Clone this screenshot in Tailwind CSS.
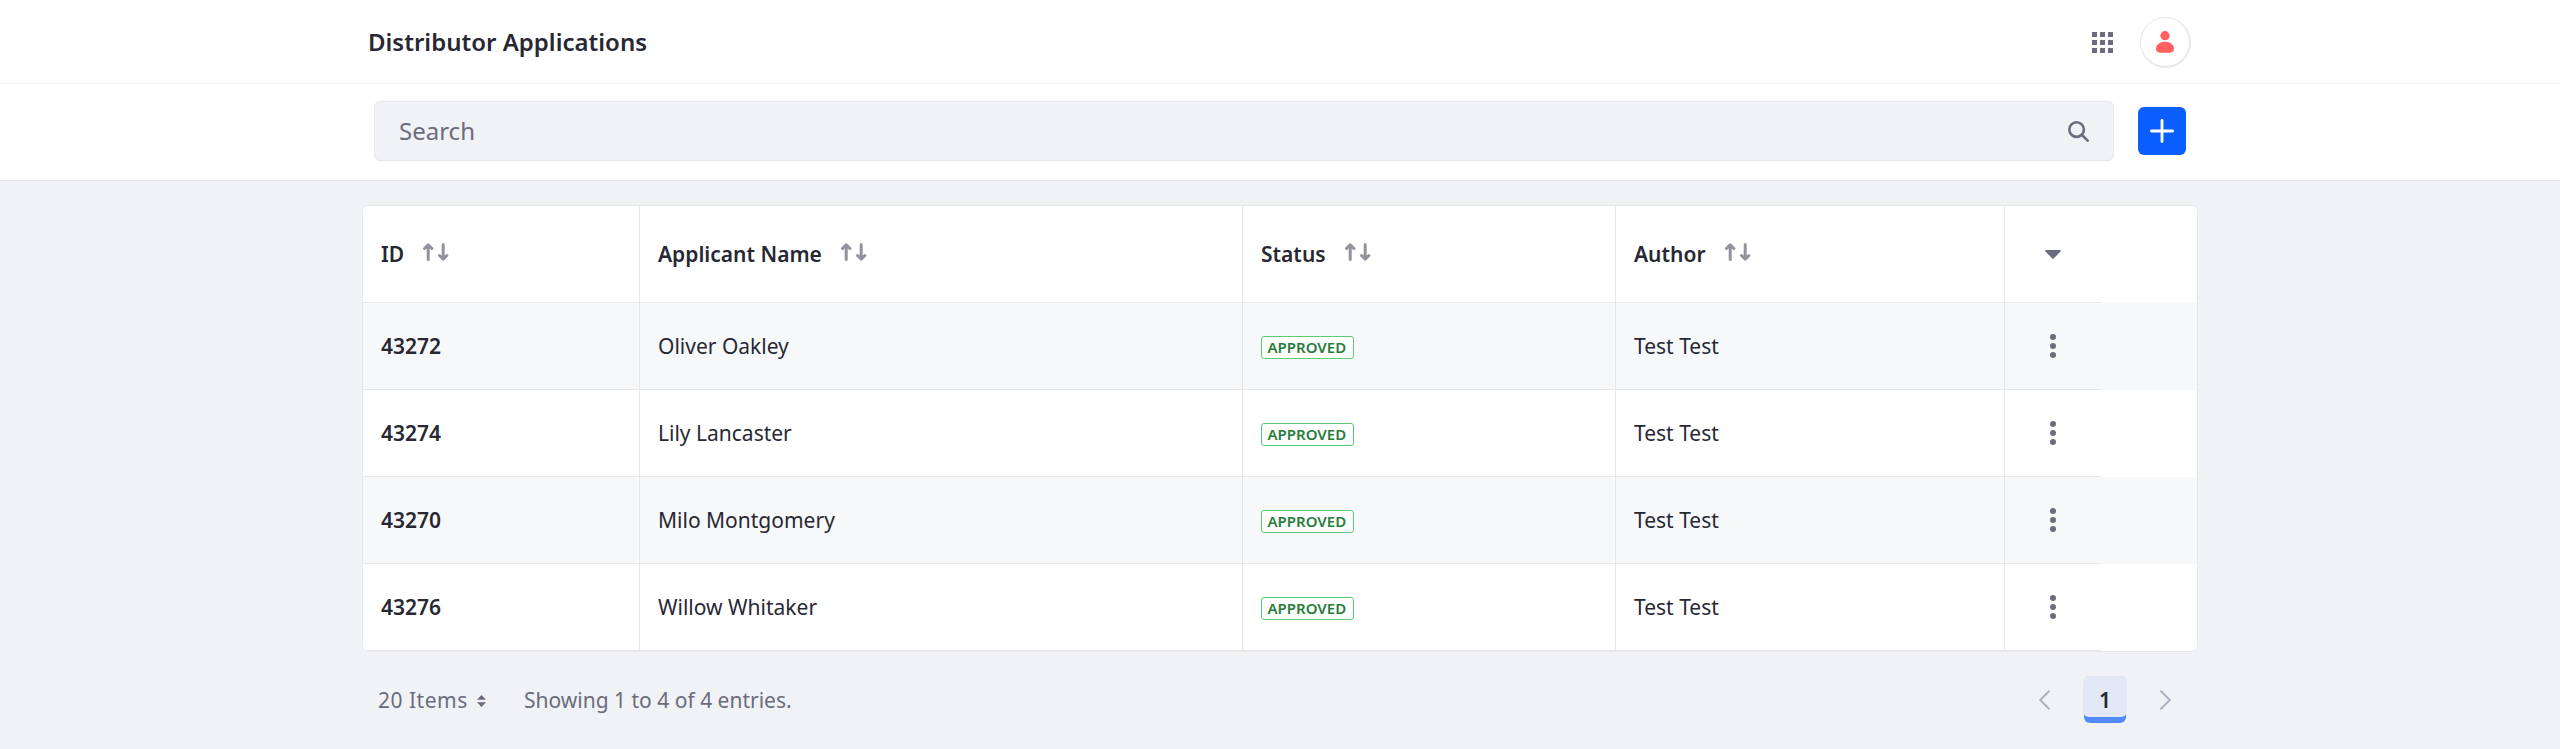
<!DOCTYPE html>
<html lang="en">
<head>
<meta charset="utf-8">
<title>Distributor Applications</title>
<script src="https://cdn.jsdelivr.net/npm/@tailwindcss/browser@4"></script>
</head>
<body class="h-[749px] overflow-hidden bg-[#f1f2f5] font-['Noto_Sans',sans-serif] text-[21px] leading-[32px] text-[#272833]">
<svg class="hidden">
  <symbol id="sort" viewBox="0 0 26 18"><path d="M5.200 16.500V2M1.500 5.500 5.200 1.800l3.700 3.700M20.200 1.500v14.500M16.500 12.500l3.700 3.700 3.700-3.700" fill="none" stroke="#92929c" stroke-width="3" stroke-linecap="round" stroke-linejoin="round"/></symbol>
  <symbol id="dots" viewBox="0 0 6 24"><g fill="#6b6c7e"><circle cx="3" cy="3" r="3"/><circle cx="3" cy="12" r="3"/><circle cx="3" cy="21" r="3"/></g></symbol>
</svg>

<header class="flex h-[84px] items-center border-b border-[#f1f2f5] bg-white pt-[2px] pr-[369px] pl-[368px]">
  <h1 class="-mt-px grow text-[24px] leading-9 font-semibold">Distributor Applications</h1>
  <svg class="mr-[27px] h-[21px] w-[21px]" viewBox="0 0 21 21" fill="#6b6c7e"><path d="M0 0h5v5H0zM8 0h5v5H8zM16 0h5v5h-5zM0 8h5v5H0zM8 8h5v5H8zM16 8h5v5h-5zM0 16h5v5H0zM8 16h5v5H8zM16 16h5v5h-5z"/></svg>
  <div class="flex h-[51px] w-[51px] items-center justify-center rounded-full border border-r-2 border-b-2 border-[#e7e7ed] bg-white">
    <svg class="h-[22px] w-[18px]" viewBox="0 0 18 22" fill="#ff5f5f"><circle cx="9" cy="4.700" r="4.600"/><path d="M9 10.800c5.500 0 9 3.400 9 6.800 0 3-2 4.200-4.500 4.200h-9C2 21.800 0 20.600 0 17.600c0-3.400 3.500-6.800 9-6.800z"/></svg>
  </div>
</header>

<section class="flex h-[97px] items-start border-b border-[#e7e7ed] bg-white pt-[17px] pl-[374px]">
  <div class="flex h-[60px] w-[1740px] items-center rounded-[6px] border border-[#e7e7ed] bg-[#f1f2f5] pr-6 pl-6">
    <span class="grow text-[24px] leading-9 text-[#6b6c7e]">Search</span>
    <svg class="h-[21px] w-[21px]" viewBox="0 0 21 21" fill="none" stroke="#6b6c7e" stroke-width="2.600" stroke-linecap="round"><circle cx="8.600" cy="8.600" r="7.300"/><path d="m14 14 5.700 5.700"/></svg>
  </div>
  <div class="mt-[6px] ml-6 flex h-12 w-12 items-center justify-center rounded-[6px] bg-[#0b5fff]">
    <svg class="h-6 w-6" viewBox="0 0 24 24" fill="none" stroke="#fff" stroke-width="2.800" stroke-linecap="round"><path d="M12 1.400v21.200M1.400 12h21.200"/></svg>
  </div>
</section>

<main class="ml-[362px] w-[1836px] pt-6">
  <div class="overflow-hidden rounded-[6px] border border-[#e7e7ed] bg-white [&_.c]:flex [&_.c]:items-center [&_.c]:border-r [&_.c]:border-b [&_.c]:border-[#e7e7ed] [&_.c]:pl-[18px] [&_.a]:flex [&_.a]:items-center [&_.a]:justify-center [&_.a]:border-b [&_.a]:border-[#e7e7ed]">
    <div class="grid h-[97px] grid-cols-[277px_603px_373px_389px_96px] font-semibold">
      <div class="c">ID<svg class="mb-[4px] ml-[19px] h-[18px] w-[26px]"><use href="#sort"/></svg></div>
      <div class="c">Applicant Name<svg class="mb-[4px] ml-[19px] h-[18px] w-[26px]"><use href="#sort"/></svg></div>
      <div class="c">Status<svg class="mb-[4px] ml-[19px] h-[18px] w-[26px]"><use href="#sort"/></svg></div>
      <div class="c">Author<svg class="mb-[4px] ml-[19px] h-[18px] w-[26px]"><use href="#sort"/></svg></div>
      <div class="a"><svg class="h-[9px] w-4" viewBox="0 0 16 9" fill="#6b6c7e"><path d="M1 0h14q1.300.4.500 1.500L9 8.300q-1 1-2 0L.5 1.500Q-.3.400 1 0z"/></svg></div>
    </div>
    <div class="grid h-[87px] grid-cols-[277px_603px_373px_389px_96px] bg-[#f7f8f9]">
      <div class="c font-semibold">43272</div>
      <div class="c">Oliver Oakley</div>
      <div class="c"><span class="mt-[3px] h-[23px] w-[93px] rounded-[3px] border border-[#5aca75] bg-white pl-[5.500px] text-[15px] leading-[21px] font-semibold text-[#287d3c]">APPROVED</span></div>
      <div class="c">Test Test</div>
      <div class="a"><svg class="h-6 w-[6px]"><use href="#dots"/></svg></div>
    </div>
    <div class="grid h-[87px] grid-cols-[277px_603px_373px_389px_96px]">
      <div class="c font-semibold">43274</div>
      <div class="c">Lily Lancaster</div>
      <div class="c"><span class="mt-[3px] h-[23px] w-[93px] rounded-[3px] border border-[#5aca75] bg-white pl-[5.500px] text-[15px] leading-[21px] font-semibold text-[#287d3c]">APPROVED</span></div>
      <div class="c">Test Test</div>
      <div class="a"><svg class="h-6 w-[6px]"><use href="#dots"/></svg></div>
    </div>
    <div class="grid h-[87px] grid-cols-[277px_603px_373px_389px_96px] bg-[#f7f8f9]">
      <div class="c font-semibold">43270</div>
      <div class="c">Milo Montgomery</div>
      <div class="c"><span class="mt-[3px] h-[23px] w-[93px] rounded-[3px] border border-[#5aca75] bg-white pl-[5.500px] text-[15px] leading-[21px] font-semibold text-[#287d3c]">APPROVED</span></div>
      <div class="c">Test Test</div>
      <div class="a"><svg class="h-6 w-[6px]"><use href="#dots"/></svg></div>
    </div>
    <div class="grid h-[87px] grid-cols-[277px_603px_373px_389px_96px]">
      <div class="c font-semibold">43276</div>
      <div class="c">Willow Whitaker</div>
      <div class="c"><span class="mt-[3px] h-[23px] w-[93px] rounded-[3px] border border-[#5aca75] bg-white pl-[5.500px] text-[15px] leading-[21px] font-semibold text-[#287d3c]">APPROVED</span></div>
      <div class="c">Test Test</div>
      <div class="a"><svg class="h-6 w-[6px]"><use href="#dots"/></svg></div>
    </div>
  </div>

  <footer class="mt-6 flex h-[47px] items-center pr-[27px] pl-4 text-[#6b6c7e]">
    <span class="w-[99px] tracking-[0.5px]">20 Items</span>
    <svg class="mt-[3px] h-3 w-[9px]" viewBox="0 0 9 12" fill="#6b6c7e"><path d="M4.500 0 9 4.800H0zM4.500 12 9 7.200H0z"/></svg>
    <span class="ml-[38px] grow">Showing 1 to 4 of 4 entries.</span>
    <svg class="h-5 w-3" viewBox="0 0 12 20" fill="none" stroke="#b0b1be" stroke-width="2" stroke-linecap="round" stroke-linejoin="round"><path d="M10 1.200 1.200 10 10 18.800"/></svg>
    <div class="mx-8 h-[47px] w-11 px-px"><div class="h-[47px] rounded-[6px] bg-[#528bff]"><div class="-mx-px h-[41px] rounded-[6px] bg-[#e2e8f6] pt-[8px] text-center font-semibold text-[#272833]">1</div></div></div>
    <svg class="h-5 w-3" viewBox="0 0 12 20" fill="none" stroke="#b0b1be" stroke-width="2" stroke-linecap="round" stroke-linejoin="round"><path d="M2 1.200 10.800 10 2 18.800"/></svg>
  </footer>
</main>
</body>
</html>
